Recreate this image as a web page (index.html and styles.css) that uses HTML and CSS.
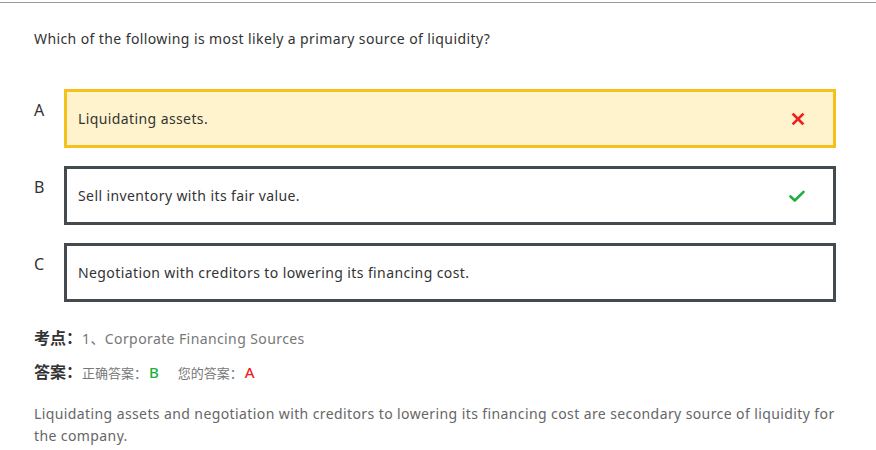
FILE: index.html
```html
<!DOCTYPE html>
<html>
<head>
<meta charset="utf-8">
<link rel="stylesheet" href="styles.css">
</head>
<body>
<div class="page">
  <p class="question">Which of the following is most likely a primary source of liquidity?</p>
  <div class="options">
    <div class="option">
      <span class="letter">A</span>
      <div class="box wrong">
        <span class="text">Liquidating assets.</span>
        <svg class="icon" width="14" height="14" viewBox="0 0 14 14"><path d="M2.5 2.5 L11.5 11.5 M11.5 2.5 L2.5 11.5" stroke="#f21d1d" stroke-width="2.6" stroke-linecap="square" fill="none"/></svg>
      </div>
    </div>
    <div class="option">
      <span class="letter">B</span>
      <div class="box">
        <span class="text">Sell inventory with its fair value.</span>
        <svg class="icon" width="16" height="14" viewBox="0 0 16 14"><path d="M1.5 7.5 L5.8 11.5 L14.5 2.8" stroke="#1fae3f" stroke-width="2.6" stroke-linecap="round" stroke-linejoin="round" fill="none"/></svg>
      </div>
    </div>
    <div class="option">
      <span class="letter">C</span>
      <div class="box">
        <span class="text">Negotiation with creditors to lowering its financing cost.</span>
      </div>
    </div>
  </div>
  <div class="meta">
    <div class="meta-row"><span class="label">考点：</span><span class="value">1、Corporate Financing Sources</span></div>
    <div class="meta-row"><span class="label">答案：</span><span class="value small">正确答案：</span><span class="right">B</span><span class="value small gap">您的答案：</span><span class="mine">A</span></div>
  </div>
  <p class="explain">Liquidating assets and negotiation with creditors to lowering its financing cost are secondary source of liquidity for the company.</p>
</div>
</body>
</html>
```

FILE: styles.css
```css
* { box-sizing: border-box; }
html, body { margin: 0; padding: 0; background: #fff; }
body {
  font-family: "Noto Sans", "Liberation Sans", "Noto Sans CJK SC", sans-serif;
  color: #333;
}
.page {
  margin-top: 2px;
  border-top: 1px solid #9a9a9a;
  padding: 0 40px 0 34px;
}
.question {
  margin: 0;
  padding-top: 26px;
  font-size: 14px;
  line-height: 20px;
  letter-spacing: 0.4px;
  color: #333;
}
.options {
  margin-top: 40px;
  display: flex;
  flex-direction: column;
  gap: 18px;
}
.option {
  display: flex;
  align-items: flex-start;
}
.letter {
  width: 30px;
  flex: none;
  font-size: 16px;
  line-height: 20px;
  margin-top: 11px;
  color: #333;
}
.box {
  flex: 1;
  height: 59px;
  border: 3px solid #454a4f;
  display: flex;
  align-items: center;
  justify-content: space-between;
  padding: 0 28px 0 11px;
  font-size: 14px;
  letter-spacing: 0.4px;
  color: #333;
}
.box.wrong {
  border-color: #f5c21b;
  background: #fff3cd;
}
.icon { flex: none; }
.meta {
  margin-top: 25px;
  display: flex;
  flex-direction: column;
  gap: 13px;
}
.meta-row {
  display: flex;
  align-items: baseline;
  line-height: 20px;
  height: 21px;
}
.label {
  font-family: "Noto Sans CJK SC", sans-serif;
  font-weight: bold;
  font-size: 16px;
  color: #333;
}
.value {
  font-size: 14px;
  letter-spacing: 0.4px;
  color: #777;
}
.value.small {
  font-family: "Noto Sans CJK SC", sans-serif;
  font-size: 13px;
  letter-spacing: 0;
}
.value.gap { margin-left: 19px; }
.right, .mine {
  font-size: 15px;
  font-weight: 500;
  margin-left: 2px;
}
.right { color: #1fae3f; }
.mine { color: #f21d1d; }
.explain {
  margin: 21px 0 0 0;
  font-size: 14px;
  line-height: 22px;
  letter-spacing: 0.4px;
  color: #666;
}
```
